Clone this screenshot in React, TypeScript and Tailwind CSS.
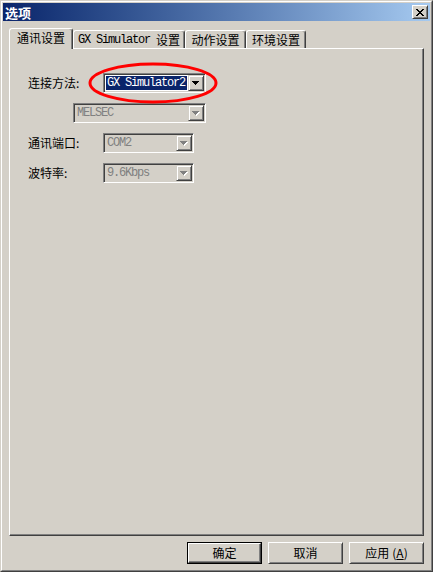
import React from "react";

const cjk = "font-['Noto_Sans_CJK_SC',sans-serif]";
const mono = "font-['Liberation_Mono','Noto_Sans_CJK_SC',monospace]";

const raised =
  "border border-t-[#d4d0c8] border-l-[#d4d0c8] border-r-[#404040] border-b-[#404040] shadow-[inset_1px_1px_0_#ffffff,inset_-1px_-1px_0_#808080]";
const raisedBtn =
  "border border-t-white border-l-white border-r-[#404040] border-b-[#404040] shadow-[inset_1px_1px_0_#d4d0c8,inset_-1px_-1px_0_#808080]";
const sunken =
  "border border-t-[#808080] border-l-[#808080] border-r-white border-b-white shadow-[inset_1px_1px_0_#404040,inset_-1px_-1px_0_#d4d0c8]";

function Arrow({ disabled }: { disabled?: boolean }) {
  const d = "M0 0h7v1H0zM1 1h5v1H1zM2 2h3v1H2zM3 3h1v1H3z";
  return (
    <svg width="8" height="5" viewBox="0 0 8 5" shapeRendering="crispEdges">
      {disabled && <path d={d} fill="#ffffff" transform="translate(1 1)" />}
      <path d={d} fill={disabled ? "#808080" : "#000000"} />
    </svg>
  );
}

function Combo({
  className,
  text,
  enabled,
}: {
  className: string;
  text: string;
  enabled?: boolean;
}) {
  return (
    <div className={`h-[20px] p-px ${sunken} ${className} ${enabled ? "bg-white" : "bg-[#d4d0c8]"}`}>
      <div className="flex h-full">
        <div className="flex-1 min-w-0 flex items-center">
          {enabled ? (
            <div className="ml-px mr-[1px] flex-1 h-[14px] bg-[#0a246a] flex items-center">
              <span className={`${mono} text-[12px] leading-none tracking-[-1.2px] text-white pl-[1px] whitespace-nowrap`}>
                {text}
              </span>
            </div>
          ) : (
            <span className={`${mono} text-[12px] leading-none tracking-[-1.2px] text-[#808080] pl-[2px] whitespace-nowrap`}>
              {text}
            </span>
          )}
        </div>
        <div className={`w-[16px] h-[16px] bg-[#d4d0c8] flex items-center justify-center ${raised}`}>
          <Arrow disabled={!enabled} />
        </div>
      </div>
    </div>
  );
}

function Tab({
  children,
  active,
  className,
}: {
  children: React.ReactNode;
  active?: boolean;
  className: string;
}) {
  return (
    <div
      className={`bg-[#d4d0c8] border-t border-l border-white border-r border-r-[#404040] shadow-[inset_-1px_0_0_#808080] rounded-tl-[3px] rounded-tr-[3px] flex items-center justify-center text-[12px] leading-none text-black whitespace-nowrap ${
        active ? "relative z-10 -mb-px h-[21px] pb-[2px]" : "h-[18px]"
      } ${className}`}
    >
      {children}
    </div>
  );
}

function Button({
  children,
  isDefault,
}: {
  children: React.ReactNode;
  isDefault?: boolean;
}) {
  return (
    <div
      className={`w-[75px] h-[22px] bg-[#d4d0c8] ${isDefault ? "border border-black" : ""}`}
    >
      <div
        className={`w-full h-full flex items-center justify-center ${cjk} text-[12px] leading-none text-black ${
          isDefault
            ? "border border-t-white border-l-white border-r-[#404040] border-b-[#404040] shadow-[inset_-1px_-1px_0_#808080]"
            : raisedBtn
        }`}
      >
        {children}
      </div>
    </div>
  );
}

export default function App() {
  return (
    <div className="w-[433px] h-[572px] bg-[#d4d0c8] border border-t-[#d4d0c8] border-l-[#d4d0c8] border-r-[#404040] border-b-[#404040]">
      <div className="h-full p-px border border-t-white border-l-white border-r-[#808080] border-b-[#808080] flex flex-col">
        {/* title bar */}
        <div className="h-[18px] bg-linear-to-r from-[#0a246a] to-[#a6caf0] flex items-center justify-between pl-[2px] pr-[2px]">
          <span className={`${cjk} text-[13px] font-bold leading-none text-white`}>选项</span>
          <div className={`w-[16px] h-[14px] bg-[#d4d0c8] flex items-center justify-center ${raisedBtn}`}>
            <svg width="8" height="7" viewBox="0 0 8 7" shapeRendering="crispEdges">
              <path
                d="M0 0h2v1H0zM6 0h2v1H6zM1 1h2v1H1zM5 1h2v1H5zM2 2h4v1H2zM3 3h2v1H3zM2 4h4v1H2zM1 5h2v1H1zM5 5h2v1H5zM0 6h2v1H0zM6 6h2v1H6z"
                fill="#000"
              />
            </svg>
          </div>
        </div>

        <div className="flex-1 flex flex-col px-[6px]">
          {/* tabs */}
          <div className="mt-[7px] h-[20px] flex items-end">
            <Tab active className={`w-[64px] ${cjk}`}>
              通讯设置
            </Tab>
            <Tab className={`w-[112px] ${mono}`}>
              <span className="tracking-[-1.2px]">GX Simulator</span>
              <span className={`${cjk} ml-[6px]`}>设置</span>
            </Tab>
            <Tab className={`w-[61px] ${cjk}`}>动作设置</Tab>
            <Tab className={`w-[60px] ${cjk}`}>环境设置</Tab>
          </div>

          {/* panel */}
          <div className="relative h-[488px] border-t border-l border-white border-r border-b border-r-[#404040] border-b-[#404040] shadow-[inset_-1px_-1px_0_#808080]">
            <div className={`pt-[24px] pl-[18px] flex flex-col gap-[10px] ${cjk} text-[12px] leading-none text-black`}>
              <div className="h-[20px] flex items-center">
                <span className="w-[75px]">连接方法:</span>
                <Combo className="w-[103px]" text="GX Simulator2" enabled />
              </div>
              <div className="h-[20px] flex items-center pl-[45px]">
                <Combo className="w-[133px]" text="MELSEC" />
              </div>
              <div className="h-[20px] flex items-center">
                <span className="w-[75px]">通讯端口:</span>
                <Combo className="w-[91px]" text="COM2" />
              </div>
              <div className="h-[20px] flex items-center">
                <span className="w-[75px]">波特率:</span>
                <Combo className="w-[91px]" text="9.6Kbps" />
              </div>
            </div>

            {/* red annotation ellipse */}
            <svg
              className="absolute left-[77px] top-[12px]"
              width="134"
              height="44"
              viewBox="0 0 134 44"
            >
              <ellipse cx="66" cy="22" rx="63" ry="19" fill="none" stroke="#ff0000" strokeWidth="3" />
            </svg>
          </div>

          {/* buttons */}
          <div className="mt-[6px] flex justify-end gap-[6px]">
            <Button isDefault>确定</Button>
            <Button>取消</Button>
            <Button>
              应用<span className="ml-[3px]">(</span>
              <span className="underline">A</span>)
            </Button>
          </div>
        </div>
      </div>
    </div>
  );
}
